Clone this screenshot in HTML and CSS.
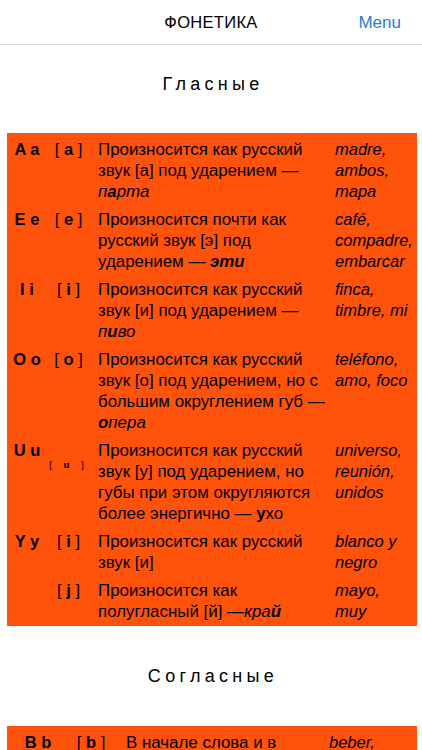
FILE: index.html
```html
<!DOCTYPE html>
<html lang="ru">
<head>
<meta charset="utf-8">
<title>Фонетика</title>
<link rel="stylesheet" href="styles.css">
</head>
<body>
<header class="topbar">
  <div class="topbar-side"></div>
  <h1 class="topbar-title">ФОНЕТИКА</h1>
  <div class="topbar-side topbar-right"><a class="menu-link" href="#">Menu</a></div>
</header>

<main>
  <h2 class="section-title first">Гласные</h2>
  <table class="phon vowels">
    <colgroup>
      <col class="c1"><col class="c2"><col class="c3"><col class="c4">
    </colgroup>
    <tr>
      <td class="letter">A a</td>
      <td class="sound">[ <b>a</b> ]</td>
      <td class="desc">Произносится как русский<br>звук [а] под ударением —<br><i>п<b>а</b>рта</i></td>
      <td class="ex">madre,<br>ambos,<br>mapa</td>
    </tr>
    <tr>
      <td class="letter">E e</td>
      <td class="sound">[ <b>e</b> ]</td>
      <td class="desc">Произносится почти как<br>русский звук [э] под<br>ударением — <b><i>эти</i></b></td>
      <td class="ex">café,<br>compadre,<br>embarcar</td>
    </tr>
    <tr>
      <td class="letter">I i</td>
      <td class="sound">[ <b>i</b> ]</td>
      <td class="desc">Произносится как русский<br>звук [и] под ударением —<br><i>п<b>и</b>во</i></td>
      <td class="ex">finca,<br>timbre, mi</td>
    </tr>
    <tr>
      <td class="letter">O o</td>
      <td class="sound">[ <b>o</b> ]</td>
      <td class="desc">Произносится как русский<br>звук [о] под ударением, но с<br>большим округлением губ —<br><i><b>о</b>пера</i></td>
      <td class="ex">teléfono,<br>amo, foco</td>
    </tr>
    <tr>
      <td class="letter">U u</td>
      <td class="sound"><span class="sound-small">[ <b>u</b> ]</span></td>
      <td class="desc">Произносится как русский<br>звук [у] под ударением, но<br>губы при этом округляются<br>более энергично — <b>у</b>хо</td>
      <td class="ex">universo,<br>reunión,<br>unidos</td>
    </tr>
    <tr>
      <td class="letter">Y y</td>
      <td class="sound">[ <b>i</b> ]</td>
      <td class="desc">Произносится как русский<br>звук [и]</td>
      <td class="ex">blanco y<br>negro</td>
    </tr>
    <tr>
      <td class="letter"></td>
      <td class="sound">[ <b>j</b> ]</td>
      <td class="desc">Произносится как<br>полугласный [й] —<i>кра<b>й</b></i></td>
      <td class="ex">mayo,<br>muy</td>
    </tr>
  </table>

  <h2 class="section-title">Согласные</h2>
  <table class="phon consonants">
    <colgroup>
      <col class="k1"><col class="k2"><col class="k3"><col class="k4">
    </colgroup>
    <tr>
      <td class="letter">B b</td>
      <td class="sound">[ <b>b</b> ]</td>
      <td class="desc">В начале слова и в<br>середине после m<br>произносится как<br>русский [б]</td>
      <td class="ex">beber,<br>hombre</td>
    </tr>
  </table>
</main>
</body>
</html>
```

FILE: styles.css
```css
html, body {
  margin: 0;
  padding: 0;
  background: #ffffff;
}

body {
  font-family: "Liberation Sans", Arial, Helvetica, sans-serif;
  color: #000;
  width: 422px;
}

.topbar {
  height: 44px;
  border-bottom: 1px solid #dadada;
  display: flex;
  align-items: center;
  justify-content: space-between;
  padding: 0 21px 0 0;
}

.topbar-side {
  width: 70px;
}

.topbar-right {
  display: flex;
  justify-content: flex-end;
}

.topbar-title {
  margin: 0;
  font-size: 16.5px;
  font-weight: normal;
  letter-spacing: 0.3px;
  padding-left: 21px;
  padding-top: 1px;
}

.menu-link {
  color: #2a78e0;
  text-decoration: none;
  font-size: 17px;
  padding-top: 1px;
}

.section-title {
  margin: 0;
  padding: 40px 0 40px;
  text-align: center;
  font-size: 18px;
  font-weight: normal;
  line-height: 20px;
  letter-spacing: 4.3px;
  text-indent: 4px;
}

.section-title.first {
  padding-top: 29px;
  padding-bottom: 39px;
}

.phon {
  margin: 0 5px 0 7px;
  width: 410px;
  background: #ff530b;
  border-collapse: collapse;
  border-spacing: 0;
  table-layout: fixed;
  font-size: 16.5px;
  line-height: 21px;
}

.phon td {
  vertical-align: top;
  padding: 3px 0 4px;
}

.phon tr:first-child td {
  padding-top: 6px;
}

.c1 { width: 40px; }
.c2 { width: 43px; }
.c3 { width: 238px; }
.c4 { width: 89px; }

.k1 { width: 62px; }
.k2 { width: 44px; }
.k3 { width: 209px; }
.k4 { width: 95px; }

.letter {
  text-align: center;
  font-weight: bold;
}

.sound {
  text-align: center;
  white-space: nowrap;
}

.sound-small {
  font-family: "Liberation Serif", "Times New Roman", serif;
  font-size: 11px;
  letter-spacing: 4px;
  vertical-align: -12px;
  line-height: 10px;
}

.desc {
  font-size: 16.9px;
  padding-left: 8px !important;
  padding-right: 0 !important;
  white-space: nowrap;
}

.ex {
  font-style: italic;
  padding-left: 7px !important;
  white-space: nowrap;
}

.consonants .desc {
  padding-left: 13px !important;
}
```
